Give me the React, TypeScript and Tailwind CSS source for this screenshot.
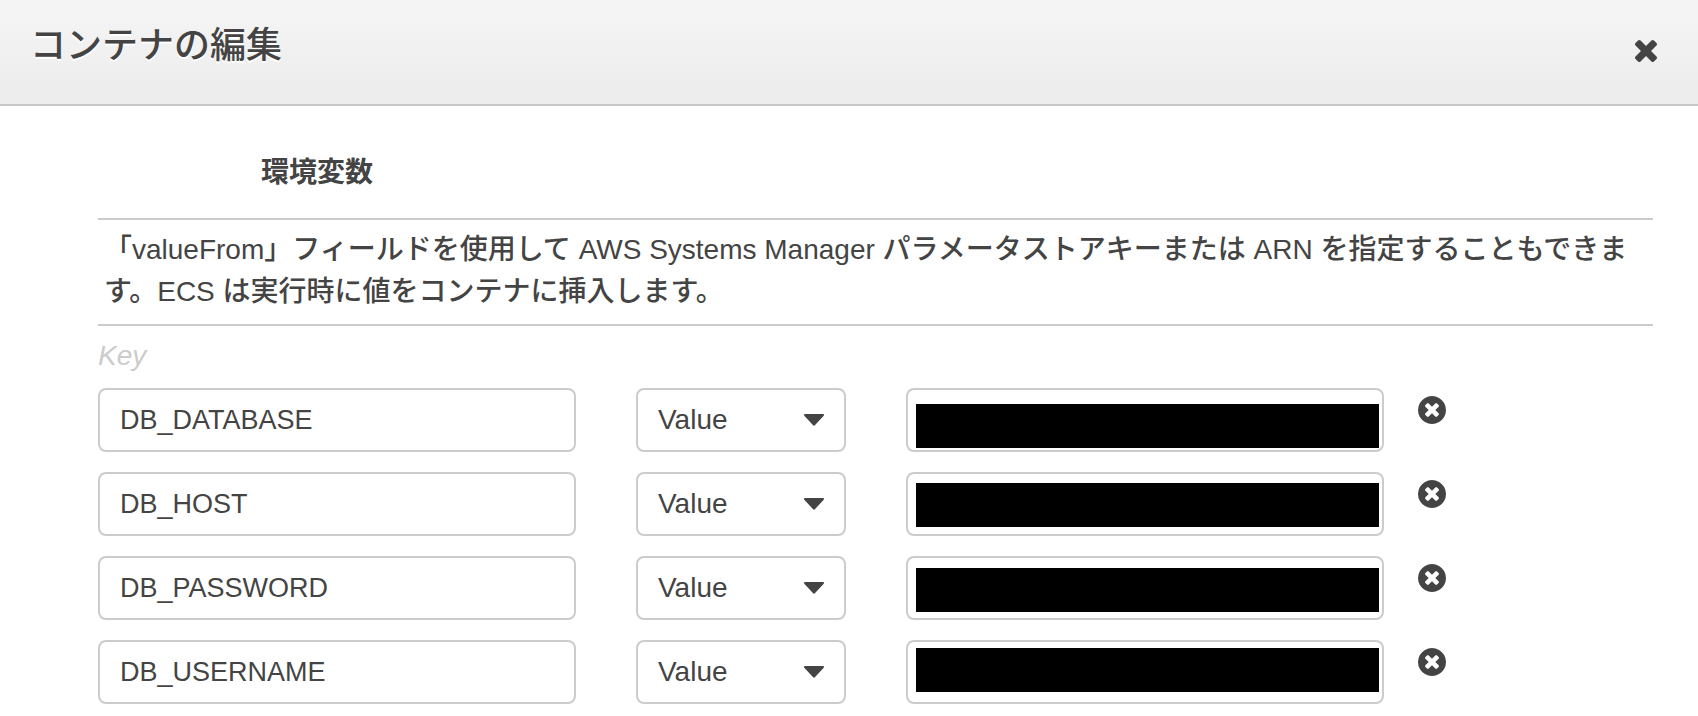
import React, { useState } from 'react';

type EnvVar = {
    id: number;
    key: string;
    // posição da tarja que esconde o valor
    maskTop: string;
};

const initialVars: EnvVar[] = [
    { id: 1, key: "DB_DATABASE", maskTop: "top-4" },
    { id: 2, key: "DB_HOST", maskTop: "top-[11px]" },
    { id: 3, key: "DB_PASSWORD", maskTop: "top-3" },
    { id: 4, key: "DB_USERNAME", maskTop: "top-2" },
];

const fieldClass = "h-16 w-full rounded-lg border-2 border-[#ccc] bg-white px-5 text-[#444] outline-none focus:border-[#888]";

const CloseIcon = () => (
    <svg viewBox="110 366 1188 1188" className="size-[22px]" fill="currentColor" aria-hidden="true">
        <path d="M1298 1322q0 40-28 68l-136 136q-28 28-68 28t-68-28l-294-294-294 294q-28 28-68 28t-68-28l-136-136q-28-28-28-68t28-68l294-294-294-294q-28-28-28-68t28-68l136-136q28-28 68-28t68 28l294 294 294-294q28-28 68-28t68 28l136 136q28 28 28 68t-28 68l-294 294 294 294q28 28 28 68z" />
    </svg>
);

const RemoveIcon = () => (
    <svg viewBox="128 128 1536 1536" className="size-7" fill="currentColor" aria-hidden="true">
        <path d="M1277 1122q0-26-19-45l-181-181 181-181q19-19 19-45 0-27-19-46l-90-90q-19-19-46-19-26 0-45 19l-181 181-181-181q-19-19-45-19-27 0-46 19l-90 90q-19 19-19 46 0 26 19 45l181 181-181 181q-19 19-19 45 0 27 19 46l90 90q19 19 46 19 26 0 45-19l181-181 181 181q19 19 45 19 27 0 46-19l90-90q19-19 19-46zm387-226q0 209-103 385.5t-279.5 279.5-385.5 103-385.5-103-279.5-279.5-103-385.5 103-385.5 279.5-279.5 385.5-103 385.5 103 279.5 279.5 103 385.5z" />
    </svg>
);

const CaretIcon = () => (
    <svg viewBox="0 0 20 12" className="pointer-events-none absolute top-[26px] right-[22px] h-3 w-5" fill="currentColor" aria-hidden="true">
        <path d="M1 0h18q1 0 1 1 0 .6-.5 1.100l-8.400 9q-1.100 1.100-2.200 0l-8.400-9Q0 1.600 0 1q0-1 1-1z" />
    </svg>
);

export default function App() {
    const [vars, setVars] = useState(initialVars);

    const removeVar = (id: number) => setVars(vars.filter(v => v.id !== id));

    return (
        <div className="min-h-screen bg-white font-['Liberation_Sans','Noto_Sans_CJK_JP',sans-serif] text-[28px] font-medium text-[#444]">
            <header className="flex items-start justify-between border-b-2 border-[#c8c8c8] bg-linear-to-b from-[#f5f5f5] to-[#ececec] pt-[22px] pr-[41px] pb-[34px] pl-[30px]">
                <h1 className="text-[36px] leading-12 font-medium [text-shadow:0_2px_0_#fff]">コンテナの編集</h1>
                <button type="button" aria-label="閉じる" className="mt-[18px] cursor-pointer">
                    <CloseIcon />
                </button>
            </header>

            <main className="pt-[46px] pr-[45px] pb-3 pl-[98px]">
                <h2 className="pl-[163px] leading-[42px] font-bold">環境変数</h2>

                <p className="mt-6 border-y-2 border-[#ccc] px-1.5 pt-[9px] pb-[11px] leading-[42px]">
                    「valueFrom」フィールドを使用して AWS Systems Manager パラメータストアキーまたは ARN を指定することもできます。ECS は実行時に値をコンテナに挿入します。
                </p>

                <div className="mt-[9px] mb-[11px] leading-[42px] text-[#ccc] italic">Key</div>

                <div className="flex flex-col gap-5">
                    {vars.map(v => (
                        <div key={v.id} className="grid grid-cols-[478fr_210fr_747fr] gap-15">
                            <input aria-label="Key" defaultValue={v.key} className={`${fieldClass} text-[27px]`} />
                            <div className="relative">
                                <select aria-label="Type" defaultValue="Value" className={`${fieldClass} appearance-none`}>
                                    <option>Value</option>
                                    <option>ValueFrom</option>
                                </select>
                                <CaretIcon />
                            </div>
                            <div className="flex items-start gap-[34px]">
                                <div className="relative w-[64%]">
                                    <input aria-label="Value" className={fieldClass} />
                                    <div className={`pointer-events-none absolute right-[5px] left-2.5 h-11 bg-black ${v.maskTop}`} />
                                </div>
                                <button type="button" aria-label="削除" onClick={() => removeVar(v.id)} className="mt-2 cursor-pointer">
                                    <RemoveIcon />
                                </button>
                            </div>
                        </div>
                    ))}
                </div>
            </main>
        </div>
    );
}
